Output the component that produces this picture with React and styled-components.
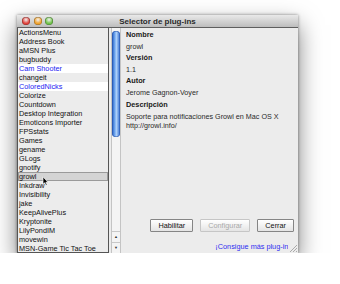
import styled, { createGlobalStyle } from 'styled-components';

const GlobalStyle = createGlobalStyle`
    html, body {
        margin: 0;
        background: #ffffff;
        font-family: "Liberation Sans", Arial, sans-serif;
    }
`;

const plugins = [
    { name: 'ActionsMenu' },
    { name: 'Address Book' },
    { name: 'aMSN Plus' },
    { name: 'bugbuddy' },
    { name: 'Cam Shooter', loaded: true },
    { name: 'changeit' },
    { name: 'ColoredNicks', loaded: true },
    { name: 'Colorize' },
    { name: 'Countdown' },
    { name: 'Desktop Integration' },
    { name: 'Emoticons Importer' },
    { name: 'FPSstats' },
    { name: 'Games' },
    { name: 'gename' },
    { name: 'GLogs' },
    { name: 'gnotify' },
    { name: 'growl', selected: true },
    { name: 'Inkdraw' },
    { name: 'Invisibility' },
    { name: 'jake' },
    { name: 'KeepAlivePlus' },
    { name: 'Kryptonite' },
    { name: 'LilyPondIM' },
    { name: 'movewin' },
    { name: 'MSN-Game Tic Tac Toe' },
];

const App = () => {
    return (
        <Page>
            <GlobalStyle />
            <Window>
                <TitleBar>
                    <Lights>
                        <Light color="#e0433c" />
                        <Light color="#f0a22c" />
                        <Light color="#6fc24a" />
                    </Lights>
                    <Title>Selector de plug-ins</Title>
                </TitleBar>

                <Body>
                    <List>
                        {plugins.map((p) => (
                            <Row key={p.name} $loaded={p.loaded} $selected={p.selected}>
                                {p.name}
                                {p.selected && (
                                    <Cursor viewBox="0 0 8 12">
                                        <path d="M1 1 L1 10 L3 8 L4.6 11.2 L6 10.5 L4.5 7.5 L7 7.5 Z" fill="#000" stroke="#fff" strokeWidth="0.8" />
                                    </Cursor>
                                )}
                            </Row>
                        ))}
                    </List>

                    <ScrollBar>
                        <Track>
                            <Thumb />
                        </Track>
                        <Arrow>▲</Arrow>
                        <Arrow>▼</Arrow>
                    </ScrollBar>

                    <Details>
                        <Info>
                            <Label>Nombre</Label>
                            <Value>growl</Value>
                            <Label>Versión</Label>
                            <Value>1.1</Value>
                            <Label>Autor</Label>
                            <Value>Jerome Gagnon-Voyer</Value>
                            <Label>Descripción</Label>
                            <Description>
                                Soporte para notificaciones Growl en Mac OS X
                                <br />
                                http://growl.info/
                            </Description>
                        </Info>

                        <Buttons>
                            <Button>Habilitar</Button>
                            <Button disabled>Configurar</Button>
                            <Button>Cerrar</Button>
                        </Buttons>

                        <Footer>
                            <MoreLink href="#">¡Consigue más plug-ins</MoreLink>
                            <Grip viewBox="0 0 10 10">
                                <path d="M9 2 L2 9 M9 5 L5 9 M9 8 L8 9" stroke="#999" strokeWidth="0.8" />
                            </Grip>
                        </Footer>
                    </Details>
                </Body>
            </Window>
        </Page>
    );
};

const Page = styled.div`
    padding: 15px 0 0 17px;
`;

const Window = styled.div`
    width: 281px;
    height: 238px;
    background: #ececec;
    display: flex;
    flex-direction: column;
    box-shadow: 0 10px 22px rgba(0, 0, 0, 0.5), 0 0 3px rgba(0, 0, 0, 0.45);
    overflow: hidden;
`;

const TitleBar = styled.div`
    height: 12px;
    flex: none;
    display: flex;
    align-items: center;
    position: relative;
    background: linear-gradient(#e9e9e9, #bdbdbd);
    border-bottom: 1px solid #5e5e5e;
`;

const Lights = styled.div`
    display: flex;
    gap: 3.5px;
    padding-left: 5px;
`;

const Light = styled.span`
    width: 8px;
    height: 8px;
    border-radius: 50%;
    background: radial-gradient(circle at 50% 35%, #ffffffaa 0, ${(p) => p.color} 55%);
    box-shadow: inset 0 0 0 0.5px rgba(0, 0, 0, 0.4);
`;

const Title = styled.div`
    position: absolute;
    left: 0;
    right: 0;
    text-align: center;
    font-size: 8px;
    font-weight: bold;
    color: #2a2a2a;
    pointer-events: none;
`;

const Body = styled.div`
    flex: 1;
    display: flex;
    min-height: 0;
`;

const List = styled.div`
    width: 90px;
    flex: none;
    border: 1px solid #555;
    border-top: none;
    background: #ececec;
    overflow: hidden;
`;

const Row = styled.div`
    height: 9px;
    line-height: 9px;
    font-size: 7.3px;
    padding-left: 1px;
    white-space: nowrap;
    position: relative;
    color: ${(p) => (p.$loaded ? '#2424f2' : '#111')};
    background: ${(p) => (p.$loaded ? '#ffffff' : p.$selected ? '#d4d4d4' : 'transparent')};
    box-shadow: ${(p) => (p.$selected ? 'inset 0 0 0 1px #9a9a9a' : 'none')};
`;

const Cursor = styled.svg`
    position: absolute;
    left: 24px;
    top: 4px;
    width: 7px;
    height: 10px;
`;

const ScrollBar = styled.div`
    width: 8px;
    flex: none;
    margin: 0 2px 0 2px;
    display: flex;
    flex-direction: column;
    background: #f4f4f4;
    border-left: 1px solid #c4c4c4;
    border-right: 1px solid #c4c4c4;
`;

const Track = styled.div`
    flex: 1;
    padding-top: 3px;
`;

const Thumb = styled.div`
    height: 106px;
    border-radius: 4px;
    background: linear-gradient(90deg, #1f58c0, #6fa6ee 35%, #b0d2fa 55%, #2f6ad0);
    box-shadow: inset 0 0 0 0.5px #2a55a8;
`;

const Arrow = styled.div`
    height: 10px;
    font-size: 4px;
    line-height: 10px;
    text-align: center;
    color: #333;
    border-top: 1px solid #c8c8c8;
`;

const Details = styled.div`
    flex: 1;
    display: flex;
    flex-direction: column;
    padding: 0 0 0 3px;
    min-width: 0;
`;

const Info = styled.div`
    flex: 1;
    padding-top: 1px;
`;

const Label = styled.div`
    font-size: 7.3px;
    font-weight: bold;
    line-height: 11.6px;
    color: #1a1a1a;
`;

const Value = styled.div`
    font-size: 7.2px;
    line-height: 11.6px;
    color: #2a2a2a;
`;

const Description = styled.div`
    font-size: 7.2px;
    line-height: 8.4px;
    color: #2a2a2a;
    padding-top: 3px;
`;

const Buttons = styled.div`
    display: flex;
    justify-content: flex-end;
    gap: 7px;
    padding-right: 4px;
`;

const Button = styled.button`
    height: 13px;
    padding: 0 7px;
    font-family: "Liberation Sans", Arial, sans-serif;
    font-size: 7.3px;
    color: ${(p) => (p.disabled ? '#a8a8a8' : '#111')};
    background: linear-gradient(#ffffff, #f2f2f2 50%, #e4e4e4);
    border: 1px solid ${(p) => (p.disabled ? '#c6c6c6' : '#858585')};
    border-radius: 1px;
`;

const Footer = styled.div`
    height: 19px;
    display: flex;
    align-items: flex-end;
    justify-content: flex-end;
    padding-bottom: 2px;
`;

const MoreLink = styled.a`
    font-size: 7.3px;
    line-height: 9px;
    color: #2e2ef0;
    text-decoration: none;
    white-space: nowrap;
    margin-right: -4px;
`;

const Grip = styled.svg`
    width: 10px;
    height: 10px;
    flex: none;
    margin-bottom: -2px;
    position: relative;
    background: #ececec;
`;

export default App;
